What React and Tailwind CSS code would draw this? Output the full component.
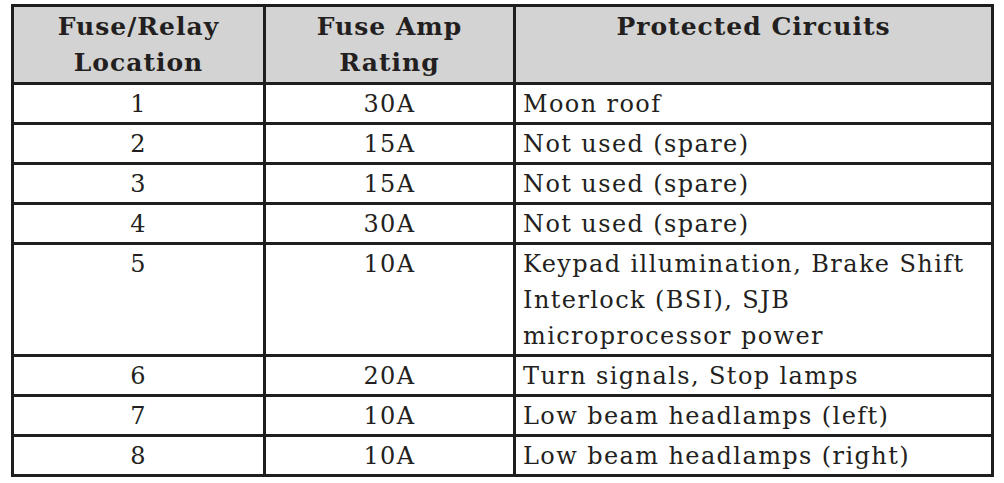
const rows = [
  ["1", "30A", "Moon roof"],
  ["2", "15A", "Not used (spare)"],
  ["3", "15A", "Not used (spare)"],
  ["4", "30A", "Not used (spare)"],
  ["5", "10A", "Keypad illumination, Brake Shift Interlock (BSI), SJB microprocessor power"],
  ["6", "20A", "Turn signals, Stop lamps"],
  ["7", "10A", "Low beam headlamps (left)"],
  ["8", "10A", "Low beam headlamps (right)"],
];

export default function App() {
  return (
    <div className="w-[1004px] h-[483px] bg-white pl-[11px] pt-[4px] font-['DejaVu_Serif',serif] text-[#231f20]">
      <table className="border-collapse w-[983px] table-fixed">
        <colgroup>
          <col className="w-[252px]" />
          <col className="w-[250px]" />
          <col />
        </colgroup>
        <thead>
          <tr className="bg-[#d3d3d3] h-[78px] text-[25px] leading-[36px] font-bold tracking-[1px]">
            <th className="border-[3px] border-[#1e1e1e] align-top pt-[2px]">
              Fuse/Relay<br />Location
            </th>
            <th className="border-[3px] border-[#1e1e1e] align-top pt-[2px]">
              Fuse Amp<br />Rating
            </th>
            <th className="border-[3px] border-[#1e1e1e] align-top pt-[2px]">
              Protected Circuits
            </th>
          </tr>
        </thead>
        <tbody>
          {rows.map((r) => (
            <tr key={r[0]} className="text-[24px] leading-[36px] tracking-[1.4px]">
              <td className="border-[3px] border-[#1e1e1e] text-center align-top pt-[1px]">{r[0]}</td>
              <td className="border-[3px] border-[#1e1e1e] text-center align-top pt-[1px]">{r[1]}</td>
              <td className="border-[3px] border-[#1e1e1e] align-top pl-[7px] pr-[4px] pt-[1px]">{r[2]}</td>
            </tr>
          ))}
        </tbody>
      </table>
    </div>
  );
}
